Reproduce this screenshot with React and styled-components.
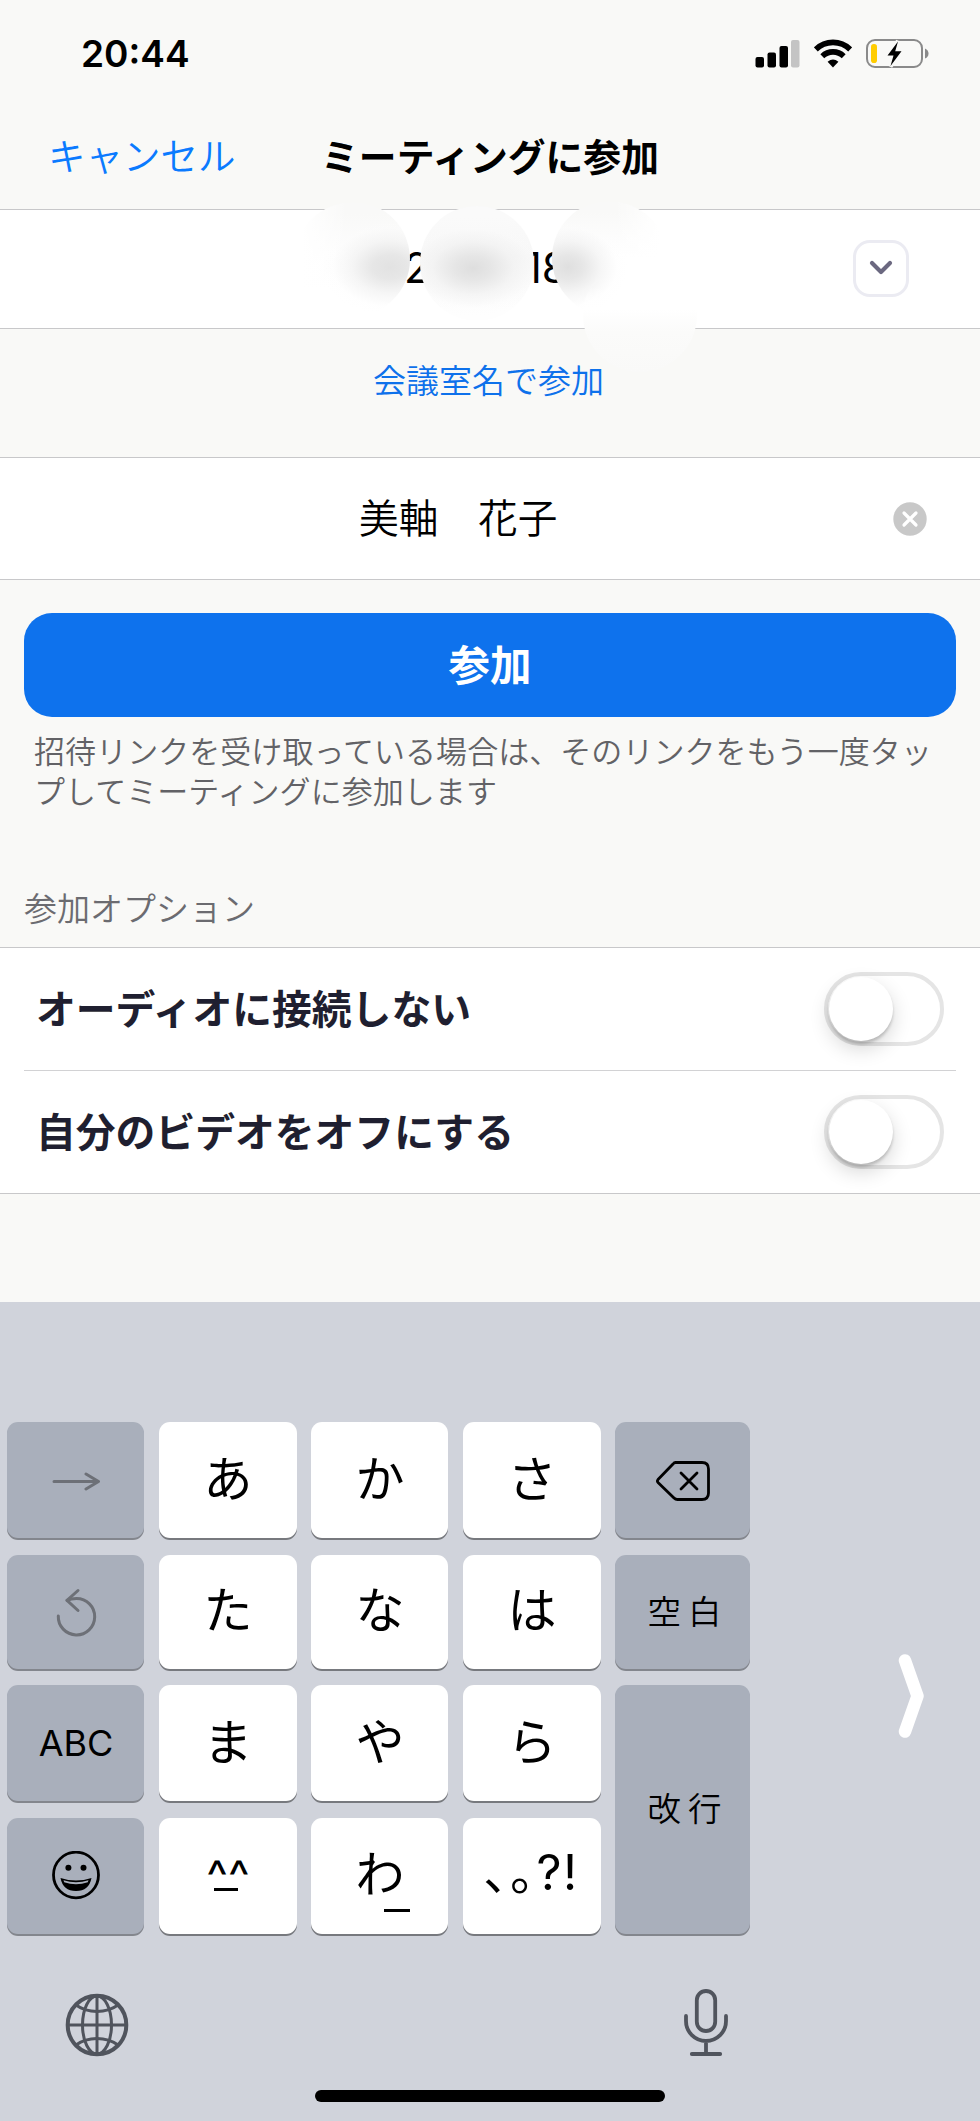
import React, { useState } from 'react';
import styled, { createGlobalStyle } from 'styled-components';

const GlobalStyle = createGlobalStyle`
    * {
        box-sizing: border-box;
    }
    body {
        margin: 0;
        background: #f9f9f7;
        font-family: Inter, "Noto Sans CJK JP", sans-serif;
        color: #000;
    }
    button {
        font-family: inherit;
        padding: 0;
        border: none;
        background: none;
        cursor: pointer;
    }
`

const Screen = styled.div`
    width: 980px;
    height: 2121px;
    display: flex;
    flex-direction: column;
    overflow: hidden;
    background: #f9f9f7;
`

const StatusBar = styled.div`
    height: 106px;
    display: flex;
    align-items: center;
    justify-content: space-between;
    padding: 0 51px 0 81px;
`

const Time = styled.span`
    margin-top: 2px;
    font-size: 37px;
    font-weight: 600;
    line-height: 44px;
`

const StatusIcons = styled.div`
    display: flex;
    align-items: center;
    gap: 14px;
    svg {
        display: block;
    }
`

const Header = styled.div`
    height: 103px;
    display: grid;
    grid-template-columns: 260px 1fr 260px;
    align-items: center;
    padding-bottom: 2px;
`

const Cancel = styled.button`
    font-size: 37.5px;
    line-height: 50px;
    text-align: left;
    padding-left: 48px;
    white-space: nowrap;
    font-weight: 350;
    color: #0a7aff;
`

const Title = styled.h1`
    margin: 0;
    font-size: 37.8px;
    line-height: 50px;
    font-weight: 700;
    text-align: center;
    white-space: nowrap;
`

const InputRow = styled.div`
    position: relative;
    height: ${props => props.height}px;
    display: flex;
    align-items: center;
    justify-content: flex-end;
    padding-right: ${props => props.right}px;
    padding-bottom: ${props => props.bottom || 0}px;
    background: #fff;
    border-top: 1px solid #c8c8ca;
    border-bottom: 1px solid #c8c8ca;
`

const MeetingNumber = styled.div`
    flex: 1;
    display: flex;
    gap: 95px;
    padding-left: 404px;
    font-size: 42px;
    line-height: 50px;
    font-weight: 400;
`

/* blurred spots hiding most of the meeting number */
const Smudge = styled.div`
    position: absolute;
    left: ${props => props.x}px;
    top: ${props => props.y}px;
    width: 114px;
    height: 114px;
    border-radius: 50%;
    background: ${props => props.fill};
`

const DropButton = styled.button`
    width: 56px;
    height: 57px;
    display: flex;
    align-items: center;
    justify-content: center;
    border: 3px solid #ebebf2;
    border-radius: 17px;
    background: #fff;
`

const LinkRow = styled.div`
    height: 128px;
    display: flex;
    justify-content: center;
    align-items: flex-start;
    padding: 28px 3px 0 0;
`

const RoomLink = styled.button`
    font-size: 33px;
    line-height: 48px;
    font-weight: 350;
    color: #0e71eb;
`

const NameText = styled.span`
    flex: 1;
    padding-left: 359px;
    font-size: 39.7px;
    line-height: 56px;
    font-weight: 350;
    white-space: pre;
`

const Clear = styled.button`
    display: flex;
`

const Actions = styled.div`
    padding: 33px 24px 0;
`

const JoinButton = styled.button`
    display: block;
    width: 100%;
    height: 104px;
    padding-bottom: 4px;
    border-radius: 28px;
    background: #0e72ed;
    color: #fff;
    font-size: 41.5px;
    font-weight: 700;
`

const Hint = styled.p`
    margin: 15px 0 0 10px;
    width: 915px;
    font-size: 31px;
    line-height: 39.5px;
    font-weight: 350;
    letter-spacing: 0.05px;
    color: #626266;
`

const SectionTitle = styled.h2`
    margin: 74px 0 0;
    padding-left: 24px;
    height: 62px;
    font-size: 33px;
    line-height: 48px;
    font-weight: 350;
    color: #6b6b70;
`

const Options = styled.div`
    background: #fff;
    border-top: 1px solid #c8c8ca;
    border-bottom: 1px solid #c8c8ca;
`

const Option = styled.label`
    height: 122px;
    display: flex;
    align-items: center;
    justify-content: space-between;
    margin: 0 24px;
    padding: 0 12px 1px;
    font-size: 39.8px;
    line-height: 56px;
    font-weight: 700;
    color: #1f1f30;
    & + & {
        height: 123px;
        border-top: 1px solid #d2d2d4;
    }
`

const OptionLabel = styled.span`
    padding-top: 2px;
`

const Switch = styled.button`
    width: 120px;
    height: 74px;
    padding: 1px;
    border: 4px solid #e5e5e5;
    border-radius: 37px;
    background: #fff;
`

const Knob = styled.span`
    display: block;
    width: 64px;
    height: 64px;
    margin-left: ${props => (props.on ? 46 : 0)}px;
    border-radius: 50%;
    background: #fff;
    box-shadow: 0 3px 3px rgba(0, 0, 0, 0.18), 0 8px 20px rgba(0, 0, 0, 0.16);
`

const Keyboard = styled.div`
    margin-top: auto;
    height: 819px;
    display: flex;
    flex-direction: column;
    background: #d0d3db;
`

const KeyArea = styled.div`
    display: flex;
    align-items: center;
    padding: 120px 56px 0 7px;
    justify-content: space-between;
`

const Keys = styled.div`
    display: grid;
    grid-template-columns: 137px 138px 137px 138px 135px;
    grid-template-rows: 118px 116px 118px 118px;
    gap: 14.5px;
`

const Key = styled.button`
    position: relative;
    grid-row: span ${props => props.rows || 1};
    display: flex;
    align-items: center;
    justify-content: center;
    margin-bottom: 2px;
    border-radius: 11px;
    background: ${props => (props.dark ? '#a9afbb' : '#fff')};
    box-shadow: 0 2px 0 ${props => (props.dark ? '#83868d' : '#77797e')};
    color: #000;
    font-size: 49px;
    line-height: 60px;
`

const Kana = styled.span`
    margin: -1px 0 0 1px;
`

const Latin = styled.span`
    margin-left: 1px;
    font-size: ${props => props.size || 36}px;
`

const Word = styled.span`
    margin-left: 11px;
    font-size: 33.5px;
    line-height: 48px;
    font-weight: 350;
    letter-spacing: 7px;
`

const Punctuation = styled.span`
    display: flex;
    margin-top: -5px;
    font-size: 49px;
    letter-spacing: 1.5px;
`

const Underline = styled.span`
    position: absolute;
    left: ${props => props.x}px;
    top: ${props => props.y}px;
    width: ${props => props.width}px;
    height: 3px;
    background: #000;
`

const Chevron = styled.svg`
    margin-top: 34px;
`

const KeyboardFooter = styled.div`
    display: flex;
    justify-content: space-between;
    padding: 52px 251px 0 65px;
    height: 154px;
`

const HomeBar = styled.div`
    width: 350px;
    height: 12px;
    margin: 0 auto;
    border-radius: 6px;
    background: #000;
`

const Signal = () => (
    <svg width="45" height="29" viewBox="0 0 45 29">
        <rect x="0.5" y="18" width="8.5" height="10.5" rx="2" />
        <rect x="12.5" y="13.5" width="8.5" height="15" rx="2" />
        <rect x="24.5" y="7" width="8.5" height="21.5" rx="2" />
        <rect x="36" y="1" width="8.5" height="27.5" rx="2" fill="#c4c4c4" />
    </svg>
)

const Wifi = () => (
    <svg width="38" height="29" viewBox="0 0 38 29" fill="none" stroke="#000" strokeWidth="5.6">
        <path d="M1.8 10.4 A24.5 24.5 0 0 1 36.2 10.4" />
        <path d="M8.3 17.2 A15.5 15.5 0 0 1 29.7 17.2" />
        <path d="M19 28.5 L13.6 22.8 Q19 18.4 24.4 22.8 Z" fill="#000" stroke="none" />
    </svg>
)

const Battery = () => (
    <svg width="63" height="31" viewBox="0 0 63 31">
        <rect x="1" y="2" width="55" height="27" rx="8" fill="none" stroke="#8a8a8a" strokeWidth="2" />
        <path d="M59 10.5 Q62.5 12 62.5 15.5 Q62.5 19 59 20.5 Z" fill="#8a8a8a" />
        <rect x="5" y="6" width="6" height="19" rx="2.8" fill="#fc0" />
        <path d="M32 3 L21.5 17.5 H27.5 L24.5 28.5 L35.5 13.2 H29.2 Z" stroke="#f9f9f7" strokeWidth="4" />
        <path d="M32 3.5 L21.5 17.5 H27.5 L24.5 28 L35.5 13.2 H29.2 Z" />
    </svg>
)

const Globe = () => (
    <svg width="64" height="72" viewBox="0 -5 64 72" fill="none" stroke="#50545d" strokeWidth="3">
        <circle cx="32" cy="32" r="29.3" strokeWidth="4" />
        <ellipse cx="32" cy="32" rx="14.5" ry="29" />
        <path d="M32 3 V61 M3 32 H61" />
        <path d="M11 12 Q20 18.5 32 18.5 Q44 18.5 53 12 M11 52 Q20 45.5 32 45.5 Q44 45.5 53 52" />
    </svg>
)

const Mic = () => (
    <svg width="46" height="70" viewBox="0 0 46 70" fill="none" stroke="#50545d" strokeWidth="3.8" strokeLinecap="round">
        <rect x="13.8" y="3" width="18.4" height="40" rx="9.2" />
        <path d="M3 28 V33 A20 20 0 0 0 43 33 V28 M23 53 V66 M8.8 66 H37.2" />
    </svg>
)

const keyboardKeys = [
    {
        id: "next", dark: true, content: (
            <svg width="50" height="22" viewBox="0 0 50 22" fill="none" stroke="#6d7077" strokeWidth="3" strokeLinecap="round" strokeLinejoin="round">
                <path d="M3 12.5 H47 M35 5 L47.5 12.5 L35 20" />
            </svg>
        )
    },
    { id: "a", kana: "あ" },
    { id: "ka", kana: "か" },
    { id: "sa", kana: "さ" },
    {
        id: "delete", dark: true, content: (
            <svg width="56" height="44" viewBox="0 0 56 44" fill="none" stroke="#000" strokeWidth="2.8" strokeLinecap="round" strokeLinejoin="round">
                <path d="M20.5 4.5 H47 Q53.5 4.5 53.5 11 V35 Q53.5 41.5 47 41.5 H22.5 Q20.5 41.5 19 40 L3 24.5 Q1.8 23 3 21.5 L18 6 Q19.2 4.5 20.5 4.5 Z" />
                <path d="M26 15 L42 31 M42 15 L26 31" />
            </svg>
        )
    },
    {
        id: "undo", dark: true, content: (
            <svg width="44" height="54" viewBox="0 0 44 54" fill="none" stroke="#6d7077" strokeWidth="3" strokeLinecap="round" strokeLinejoin="round">
                <path d="M4.3 31 A18.2 18.2 0 1 0 22.5 13.5 Q17 13.5 13 15.3" />
                <path d="M24 5.5 L13 15.3 L24 25.5" />
            </svg>
        )
    },
    { id: "ta", kana: "た" },
    { id: "na", kana: "な" },
    { id: "ha", kana: "は" },
    { id: "space", dark: true, content: <Word>空白</Word> },
    { id: "abc", dark: true, content: <Latin>ABC</Latin> },
    { id: "ma", kana: "ま" },
    { id: "ya", kana: "や" },
    { id: "ra", kana: "ら" },
    { id: "return", dark: true, rows: 2, content: <Word>改行</Word> },
    {
        id: "emoji", dark: true, content: (
            <svg width="48" height="50" viewBox="0 0 48 50">
                <ellipse cx="24" cy="24" rx="22.5" ry="22.8" fill="none" stroke="#000" strokeWidth="2.8" />
                <circle cx="16.4" cy="16.8" r="3" />
                <circle cx="31.5" cy="16.8" r="3" />
                <path d="M8.5 27 Q24 32 39.5 27 Q37 40 24 40 Q11 40 8.5 27 Z" />
                <path d="M11.5 29.3 Q24 33 36.5 29.3 L35.8 31.2 Q24 35.5 12.2 31.2 Z" fill="#a9afbb" />
            </svg>
        )
    },
    { id: "face", content: <><Latin size={46}>^^</Latin><Underline x={55} y={70} width={24} /></> },
    { id: "wa", kana: "わ", content: <Underline x={73} y={91} width={26} /> },
    { id: "punctuation", content: <Punctuation>､｡?!</Punctuation> },
]

const smudges = [
    { x: 296, y: -8, fill: "radial-gradient(ellipse 70px 48px at 94px 65px, #e2e2e2, rgba(228,228,228,0.9) 25%, rgba(240,240,240,0.6) 55%, rgba(252,252,252,0.2) 82%, rgba(255,255,255,0) 100%), linear-gradient(90deg, #fff 5%, rgba(255,255,255,0) 45%), linear-gradient(#f9f9f8 10%, #fdfdfd 45%, #fff 75%)" },
    { x: 420, y: -4, fill: "radial-gradient(ellipse 74px 48px at 53px 62px, #dedede, rgba(228,228,228,0.9) 25%, rgba(240,240,240,0.6) 55%, rgba(250,250,250,0.2) 82%, rgba(255,255,255,0) 100%), linear-gradient(#fafafa 10%, #f7f7f7 45%, #fefefe 90%)" },
    { x: 552, y: -9, fill: "radial-gradient(ellipse 60px 48px at 16px 66px, #dfdfdf, rgba(228,228,228,0.9) 25%, rgba(240,240,240,0.6) 55%, rgba(252,252,252,0.2) 82%, rgba(255,255,255,0) 100%), linear-gradient(270deg, #fff 5%, rgba(255,255,255,0) 45%), linear-gradient(#f9f9f8 10%, #fdfdfd 35%, #fff 50%)" },
    { x: 583, y: 48, fill: "linear-gradient(rgba(255,255,255,0) 25%, #fff 45%, #fbfbfa 65%, #f9f9f8 100%)" },
]

const App = () => {

    const [name, setName] = useState("美軸　花子")
    const [options, setOptions] = useState({
        audio: false,
        video: false
    })

    const ToggleHandle = (key) => {
        setOptions({ ...options, [key]: !options[key] })
    }

    return (
        <Screen>
            <GlobalStyle />
            <StatusBar>
                <Time>20:44</Time>
                <StatusIcons>
                    <Signal />
                    <Wifi />
                    <Battery />
                </StatusIcons>
            </StatusBar>
            <Header>
                <Cancel>キャンセル</Cancel>
                <Title>ミーティングに参加</Title>
            </Header>
            <InputRow height={120} right={71} bottom={2}>
                <MeetingNumber>
                    <span>2</span>
                    <span>18</span>
                </MeetingNumber>
                {smudges.map((item) => (
                    <Smudge key={item.x} x={item.x} y={item.y} fill={item.fill} />
                ))}
                <DropButton>
                    <svg width="26" height="18" viewBox="0 0 26 18" fill="none" stroke="#6b6880" strokeWidth="4.2" strokeLinecap="round" strokeLinejoin="round">
                        <path d="M4 4 L13 13 L22 4" />
                    </svg>
                </DropButton>
            </InputRow>
            <LinkRow>
                <RoomLink>会議室名で参加</RoomLink>
            </LinkRow>
            <InputRow height={123} right={53}>
                <NameText>{name}</NameText>
                <Clear onClick={() => setName("")}>
                    <svg width="34" height="34" viewBox="0 0 34 34">
                        <circle cx="17" cy="17" r="16.7" fill="#c8c8c8" />
                        <path d="M11 11 L23 23 M23 11 L11 23" stroke="#fff" strokeWidth="3.2" strokeLinecap="round" />
                    </svg>
                </Clear>
            </InputRow>
            <Actions>
                <JoinButton>参加</JoinButton>
                <Hint>招待リンクを受け取っている場合は、そのリンクをもう一度タップしてミーティングに参加します</Hint>
            </Actions>
            <SectionTitle>参加オプション</SectionTitle>
            <Options>
                <Option>
                    <OptionLabel>オーディオに接続しない</OptionLabel>
                    <Switch onClick={() => ToggleHandle("audio")}><Knob on={options.audio} /></Switch>
                </Option>
                <Option>
                    <OptionLabel>自分のビデオをオフにする</OptionLabel>
                    <Switch onClick={() => ToggleHandle("video")}><Knob on={options.video} /></Switch>
                </Option>
            </Options>
            <Keyboard>
                <KeyArea>
                    <Keys>
                        {keyboardKeys.map((item) => (
                            <Key key={item.id} dark={item.dark} rows={item.rows}>
                                {item.kana && <Kana>{item.kana}</Kana>}
                                {item.content}
                            </Key>
                        ))}
                    </Keys>
                    <Chevron width="26" height="86" viewBox="0 0 26 86" fill="none" stroke="#fff" strokeWidth="12.5" strokeLinecap="round" strokeLinejoin="round">
                        <path d="M7 7.5 L19.5 43 L7 78.5" />
                    </Chevron>
                </KeyArea>
                <KeyboardFooter>
                    <Globe />
                    <Mic />
                </KeyboardFooter>
                <HomeBar />
            </Keyboard>
        </Screen>
    );
};

export default App;
